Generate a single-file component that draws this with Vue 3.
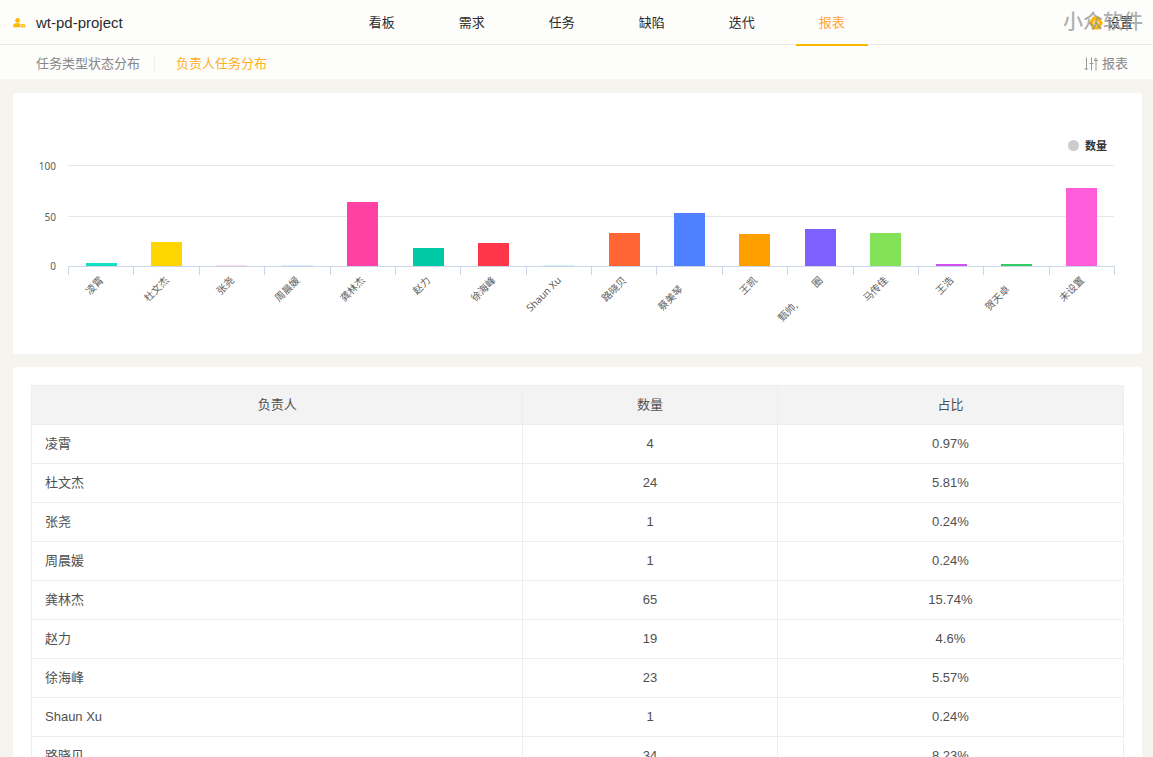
<script setup>
const navItems = ['看板', '需求', '任务', '缺陷', '迭代', '报表']
const activeNav = '报表'

const plot = { left: 55.5, width: 1046, base: 173.5 }
const step = plot.width / 16
const barWidth = 31

const series = [
  { name: '凌霄', value: 3, color: '#15dfc3' },
  { name: '杜文杰', value: 24, color: '#ffd500' },
  { name: '张尧', value: 1, color: '#fbdbe6' },
  { name: '周晨媛', value: 1, color: '#d3ecf8' },
  { name: '龚林杰', value: 64, color: '#ff41a3' },
  { name: '赵力', value: 18, color: '#00c9a5' },
  { name: '徐海峰', value: 23, color: '#ff3549' },
  { name: 'Shaun Xu', value: 1, color: '#d3f2f4' },
  { name: '路晓贝', value: 33, color: '#ff6633' },
  { name: '蔡美琴', value: 53, color: '#4f80ff', drop: 9 },
  { name: '王凯', value: 32, color: '#ff9f00' },
  { name: '圈', lead: '甄帅,', value: 37, color: '#7e60ff' },
  { name: '马传佳', value: 33, color: '#83e257' },
  { name: '王浩', value: 2, color: '#d150ee' },
  { name: '贺天卓', value: 2, color: '#33cc66', drop: 9 },
  { name: '未设置', value: 78, color: '#ff5dda' },
]

const center = (i) => plot.left + step * (i + 0.5)
const tick = (i) => Math.round(plot.left + step * i - 0.5) + 0.5
const barX = (i) => Math.round(center(i) - barWidth / 2)
const labelAt = (i, drop = 0) => `translate(${center(i) + 3 - drop} ${188 + drop}) rotate(-45)`

const gridLines = [
  { value: 100, y: 72.5 },
  { value: 50, y: 123.5 },
]

const rows = [
  ['凌霄', 4, '0.97%'],
  ['杜文杰', 24, '5.81%'],
  ['张尧', 1, '0.24%'],
  ['周晨媛', 1, '0.24%'],
  ['龚林杰', 65, '15.74%'],
  ['赵力', 19, '4.6%'],
  ['徐海峰', 23, '5.57%'],
  ['Shaun Xu', 1, '0.24%'],
  ['路晓贝', 34, '8.23%'],
]
</script>

<template>
  <div class="page">
    <header class="header">
      <div class="topbar">
        <a class="project" href="#">
          <svg class="project-icon" viewBox="0 0 13 10" aria-hidden="true">
            <circle cx="4.6" cy="2.4" r="2.3" />
            <path d="M0.3 9.2V7.8Q0.3 5.2 3 5.2H6Q7.4 5.2 7.4 6.6V9.2Z" />
            <path fill-rule="evenodd" d="M8 9.2V7.4Q8.2 5.8 10 5.8Q12.2 5.8 12.4 7.4V9.2ZM9.2 8H11.2V7.2H9.2Z" />
          </svg>
          <span>wt-pd-project</span>
        </a>
        <nav class="nav">
          <a
            v-for="item in navItems"
            :key="item"
            href="#"
            class="nav-item"
            :class="{ active: item === activeNav }"
          >{{ item }}</a>
        </nav>
        <button type="button" class="settings">
          <svg class="settings-icon" viewBox="0 0 14 14" aria-hidden="true">
            <path d="M4 1H10L13.4 7L10 13H4L0.6 7Z" fill="#ffb800" stroke="#ffb800" stroke-linejoin="round" />
            <circle cx="7" cy="7" r="2.3" fill="none" stroke="#fff" />
          </svg>
          <span>设置</span>
        </button>
        <span class="watermark">小众软件</span>
      </div>
      <div class="subbar">
        <nav class="tabs">
          <a href="#" class="tab">任务类型状态分布</a>
          <a href="#" class="tab active">负责人任务分布</a>
        </nav>
        <button type="button" class="report">
          <svg class="report-icon" viewBox="0 0 14 14" aria-hidden="true">
            <path d="M2.5 0.5V13M0.5 11L2.5 13L4 11.5M7.5 0.5V13.5M5.5 6.5H9.5M12 13.5V1M10 3.5H14M10.5 2.5L12 1" />
          </svg>
          <span>报表</span>
        </button>
      </div>
    </header>

    <main class="content">
      <section class="card">
        <svg class="chart" viewBox="0 0 1129 261" role="img" aria-label="负责人任务分布">
          <g>
            <circle cx="1060.5" cy="52.5" r="5.5" fill="#ccc" />
            <text class="legend" x="1072" y="57">数量</text>
          </g>
          <g v-for="line in gridLines" :key="line.value">
            <path class="grid" :d="`M55 ${line.y}H1101`" />
            <text class="axis" x="43" :y="line.y + 4" text-anchor="end">{{ line.value }}</text>
          </g>
          <text class="axis" x="43" y="177" text-anchor="end">0</text>
          <rect
            v-for="(bar, i) in series"
            :key="bar.name"
            :x="barX(i)"
            :y="173 - bar.value"
            :width="barWidth"
            :height="bar.value"
            :fill="bar.color"
          />
          <path class="baseline" :d="`M55 ${plot.base}H1102`" />
          <path v-for="n in 17" :key="n" class="baseline" :d="`M${tick(n - 1)} 173V182`" />
          <g v-for="(bar, i) in series" :key="bar.name">
            <text class="label" :transform="labelAt(i, bar.drop)" text-anchor="end">{{ bar.name }}</text>
            <text v-if="bar.lead" class="label" :transform="labelAt(i, 25)" text-anchor="end">{{ bar.lead }}</text>
          </g>
        </svg>
      </section>

      <section class="card table-card">
        <table class="table">
          <colgroup>
            <col class="owner">
            <col class="count">
            <col>
          </colgroup>
          <thead>
            <tr>
              <th>负责人</th>
              <th>数量</th>
              <th>占比</th>
            </tr>
          </thead>
          <tbody>
            <tr v-for="[name, count, share] in rows" :key="name">
              <td class="name">{{ name }}</td>
              <td>{{ count }}</td>
              <td>{{ share }}</td>
            </tr>
          </tbody>
        </table>
      </section>
    </main>
  </div>
</template>

<style>
html {
  scrollbar-width: none;
}
body {
  background: #f5f4ef;
}
</style>

<style scoped>
.page {
  min-height: 100vh;
  background: #f5f4ef;
  color: #2b2b2b;
  font: 13px/20px "Liberation Sans", "Noto Sans CJK SC", sans-serif;
}
.page a {
  color: inherit;
  text-decoration: none;
}
.page button {
  display: flex;
  align-items: center;
  padding: 0;
  border: 0;
  background: none;
  color: inherit;
  font: inherit;
}
.header {
  background: #fdfdfb;
}
.topbar {
  position: relative;
  display: flex;
  justify-content: space-between;
  height: 44px;
  padding: 0 20px 0 13px;
  border-bottom: 1px solid #e8e8e8;
}
.project {
  display: flex;
  align-items: center;
  gap: 10px;
  padding: 2px 2px 0 0;
  font-size: 15px;
}
.project-icon {
  width: 13px;
  height: 10px;
  fill: #ffb800;
}
.nav {
  display: flex;
  gap: 18px;
}
.nav-item {
  width: 72px;
  height: 44px;
  border-bottom: 2px solid transparent;
  line-height: 46px;
  text-align: center;
}
.page .nav-item.active {
  border-color: #ffb800;
  color: #ffa63d;
}
.page .settings {
  gap: 4px;
  padding-top: 1px;
}
.settings-icon {
  width: 14px;
  height: 14px;
}
.watermark {
  position: absolute;
  top: 8px;
  right: 10px;
  color: rgba(150, 150, 150, 0.75);
  font-size: 20px;
  font-weight: 500;
  line-height: 28px;
  pointer-events: none;
}
.subbar {
  display: flex;
  justify-content: space-between;
  align-items: center;
  height: 34px;
  padding: 3px 25px 0 36px;
  box-sizing: border-box;
  color: #888;
}
.tabs {
  display: flex;
  align-items: center;
}
.tab + .tab {
  margin-left: 14px;
  padding-left: 21px;
  border-left: 1px solid #eee;
  line-height: 14px;
}
.page .tab.active {
  color: #ffb01f;
}
.page .report {
  gap: 4px;
}
.report-icon {
  width: 14px;
  height: 14px;
  fill: none;
  stroke: #999;
}
.content {
  display: grid;
  gap: 13px;
  padding: 14px 11px 13px 13px;
}
.card {
  border-radius: 3px;
  background: #fff;
}
.table-card {
  padding: 18px;
}
.chart {
  display: block;
  width: 100%;
}
.legend {
  fill: #333;
  font: bold 11px "Noto Sans", "Noto Sans CJK SC", sans-serif;
}
.axis,
.label {
  fill: #606060;
  font: 10px "Noto Sans", "Noto Sans CJK SC", sans-serif;
}
.grid {
  stroke: #e6e6e6;
}
.baseline {
  stroke: #ccd6eb;
}
.table {
  width: 100%;
  table-layout: fixed;
  border-collapse: collapse;
  color: #505050;
}
.table th,
.table td {
  height: 38px;
  padding: 0 13px;
  border: 1px solid #eee;
  font-weight: normal;
  text-align: center;
}
.table th {
  background: #f3f3f3;
}
.owner {
  width: 45%;
}
.count {
  width: 23.3%;
}
.table .name {
  text-align: left;
}
</style>
